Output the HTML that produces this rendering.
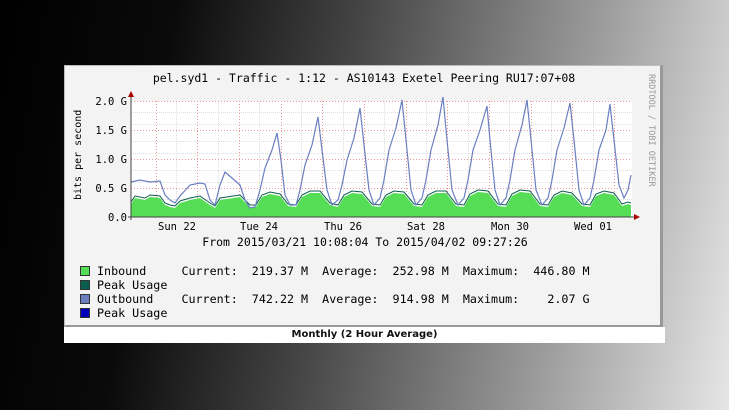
<!DOCTYPE html>
<html><head><meta charset="utf-8"><style>
body{margin:0;width:729px;height:410px;overflow:hidden;background:linear-gradient(100deg,#000 0%,#0a0a0a 22%,#444 45%,#9a9a9a 75%,#e6e6e6 100%);position:relative;font-family:"DejaVu Sans Mono","Liberation Mono",monospace}
#panel{position:absolute;left:64px;top:65px;width:599px;height:262px;background:#f3f3f3;border:1px solid #bbb;border-right:3px solid #999;border-bottom:2px solid #999;box-sizing:border-box}
#cap{position:absolute;left:64px;top:327px;width:601px;height:16px;background:#fff;font:bold 10px "DejaVu Sans","Liberation Sans",sans-serif;text-align:center;line-height:16px;color:#111}
svg{position:absolute;left:0;top:0}
text{font-family:"DejaVu Sans Mono","Liberation Mono",monospace;fill:#000;white-space:pre}
</style></head><body>
<div id="panel"></div>
<div id="cap">Monthly (2 Hour Average)</div>
<svg width="729" height="410">
<rect x="131" y="101" width="501" height="116" fill="#fff"/>
<g stroke="#ddd" stroke-dasharray="1,1">
<line x1="131" x2="632" y1="112.5" y2="112.5"/><line x1="131" x2="632" y1="124.5" y2="124.5"/><line x1="131" x2="632" y1="141.5" y2="141.5"/><line x1="131" x2="632" y1="153.5" y2="153.5"/><line x1="131" x2="632" y1="170.5" y2="170.5"/><line x1="131" x2="632" y1="182.5" y2="182.5"/><line x1="131" x2="632" y1="199.5" y2="199.5"/><line x1="131" x2="632" y1="211.5" y2="211.5"/>
<line x1="176.5" x2="176.5" y1="101" y2="217"/><line x1="218.5" x2="218.5" y1="101" y2="217"/><line x1="259.5" x2="259.5" y1="101" y2="217"/><line x1="301.5" x2="301.5" y1="101" y2="217"/><line x1="343.5" x2="343.5" y1="101" y2="217"/><line x1="384.5" x2="384.5" y1="101" y2="217"/><line x1="426.5" x2="426.5" y1="101" y2="217"/><line x1="468.5" x2="468.5" y1="101" y2="217"/><line x1="509.5" x2="509.5" y1="101" y2="217"/><line x1="551.5" x2="551.5" y1="101" y2="217"/><line x1="593.5" x2="593.5" y1="101" y2="217"/>
</g>
<g stroke="#e99" stroke-dasharray="1,2">
<line x1="131" x2="632" y1="101.5" y2="101.5"/><line x1="131" x2="632" y1="130.5" y2="130.5"/><line x1="131" x2="632" y1="159.5" y2="159.5"/><line x1="131" x2="632" y1="188.5" y2="188.5"/>
<line x1="156.5" x2="156.5" y1="101" y2="217"/><line x1="197.5" x2="197.5" y1="101" y2="217"/><line x1="239.5" x2="239.5" y1="101" y2="217"/><line x1="281.5" x2="281.5" y1="101" y2="217"/><line x1="322.5" x2="322.5" y1="101" y2="217"/><line x1="364.5" x2="364.5" y1="101" y2="217"/><line x1="406.5" x2="406.5" y1="101" y2="217"/><line x1="447.5" x2="447.5" y1="101" y2="217"/><line x1="489.5" x2="489.5" y1="101" y2="217"/><line x1="531.5" x2="531.5" y1="101" y2="217"/><line x1="572.5" x2="572.5" y1="101" y2="217"/><line x1="614.5" x2="614.5" y1="101" y2="217"/>
</g>
<polygon fill="#55dd55" points="131,217 131,204 135,198 145,200 150,197 160,198 165,205 170,207 175,208 180,203 190,200 200,198 210,205 215,208 220,200 240,197 250,207 256,207 262,197 270,194 280,196 288,206 296,207 302,197 310,193 320,193 330,205 338,207 344,197 352,193 362,194 372,206 380,207 386,197 394,193 404,194 414,206 422,207 428,197 436,193 446,193 456,206 464,207 470,196 478,192 488,193 498,206 506,207 512,196 520,192 530,193 540,206 548,207 554,197 562,193 572,195 582,206 590,207 596,196 604,193 614,195 622,206 628,204 631,205 631,217"/>
<polyline fill="none" stroke="#0b5e4e" stroke-width="1" points="131,202 135,196 145,198 150,195 160,196 165,203 170,205 175,206 180,201 190,198 200,196 210,203 215,206 220,198 240,195 250,205 256,205 262,195 270,192 280,194 288,204 296,205 302,195 310,191 320,191 330,203 338,205 344,195 352,191 362,192 372,204 380,205 386,195 394,191 404,192 414,204 422,205 428,195 436,191 446,191 456,204 464,205 470,194 478,190 488,191 498,204 506,205 512,194 520,190 530,191 540,204 548,205 554,195 562,191 572,193 582,204 590,205 596,194 604,191 614,193 622,204 628,202 631,203"/>
<polyline fill="none" stroke="#6b7fc0" stroke-width="1.2" points="131,182 140,180 150,182 160,181 165,195 170,200 175,203 180,196 190,185 200,183 205,184 210,200 215,205 220,185 225,172 232,178 240,185 245,200 250,208 255,207 260,190 265,168 272,150 277,133 281,160 285,195 290,205 296,205 300,190 305,165 312,145 318,117 322,150 327,190 332,205 338,200 342,185 347,160 354,138 360,108 364,145 369,190 374,205 380,198 384,180 389,150 396,128 402,100 406,140 411,190 416,205 422,198 426,180 431,150 438,125 443,97 447,140 452,190 458,205 464,198 468,180 473,150 480,130 487,106 490,140 495,190 500,205 506,198 510,180 515,150 522,125 527,100 531,140 536,190 542,205 548,198 552,180 557,150 564,128 570,103 574,140 579,190 584,205 590,198 594,180 599,150 606,130 610,104 614,140 619,185 624,198 628,190 631,175"/>
<line x1="131" y1="95" x2="131" y2="220" stroke="#444"/>
<line x1="128" y1="217" x2="636" y2="217" stroke="#444"/>
<polygon points="128,97 134,97 131,91" fill="#a00"/>
<polygon points="634,214 634,220 640,217" fill="#a00"/>
<g font-size="10.5">
<text x="364" y="82" text-anchor="middle" font-size="11.5">pel.syd1 - Traffic - 1:12 - AS10143 Exetel Peering RU17:07+08</text>
<text x="127" y="105" text-anchor="end">2.0 G</text>
<text x="127" y="134" text-anchor="end">1.5 G</text>
<text x="127" y="163" text-anchor="end">1.0 G</text>
<text x="127" y="192" text-anchor="end">0.5 G</text>
<text x="127" y="221" text-anchor="end">0.0</text>
<text x="177" y="230" text-anchor="middle">Sun 22</text>
<text x="259" y="230" text-anchor="middle">Tue 24</text>
<text x="343" y="230" text-anchor="middle">Thu 26</text>
<text x="426" y="230" text-anchor="middle">Sat 28</text>
<text x="510" y="230" text-anchor="middle">Mon 30</text>
<text x="593" y="230" text-anchor="middle">Wed 01</text>
<text x="365" y="246" text-anchor="middle" font-size="11.5">From 2015/03/21 10:08:04 To 2015/04/02 09:27:26</text>
<text transform="translate(81,200) rotate(-90)" font-size="10">bits per second</text>
<text transform="translate(649,74) rotate(90)" font-size="8.5" style="fill:#999">RRDTOOL / TOBI OETIKER</text>
<g font-size="11.7">
<text x="97" y="275">Inbound     Current:  219.37 M  Average:  252.98 M  Maximum:  446.80 M</text>
<text x="97" y="289">Peak Usage</text>
<text x="97" y="303">Outbound    Current:  742.22 M  Average:  914.98 M  Maximum:    2.07 G</text>
<text x="97" y="317">Peak Usage</text>
</g>
</g>
<rect x="80.5" y="266.5" width="9" height="9" fill="#55dd55" stroke="#333"/>
<rect x="80.5" y="280.5" width="9" height="9" fill="#0b5e4e" stroke="#333"/>
<rect x="80.5" y="294.5" width="9" height="9" fill="#6b7fc0" stroke="#333"/>
<rect x="80.5" y="308.5" width="9" height="9" fill="#0000bb" stroke="#333"/>
</svg>
</body></html>
